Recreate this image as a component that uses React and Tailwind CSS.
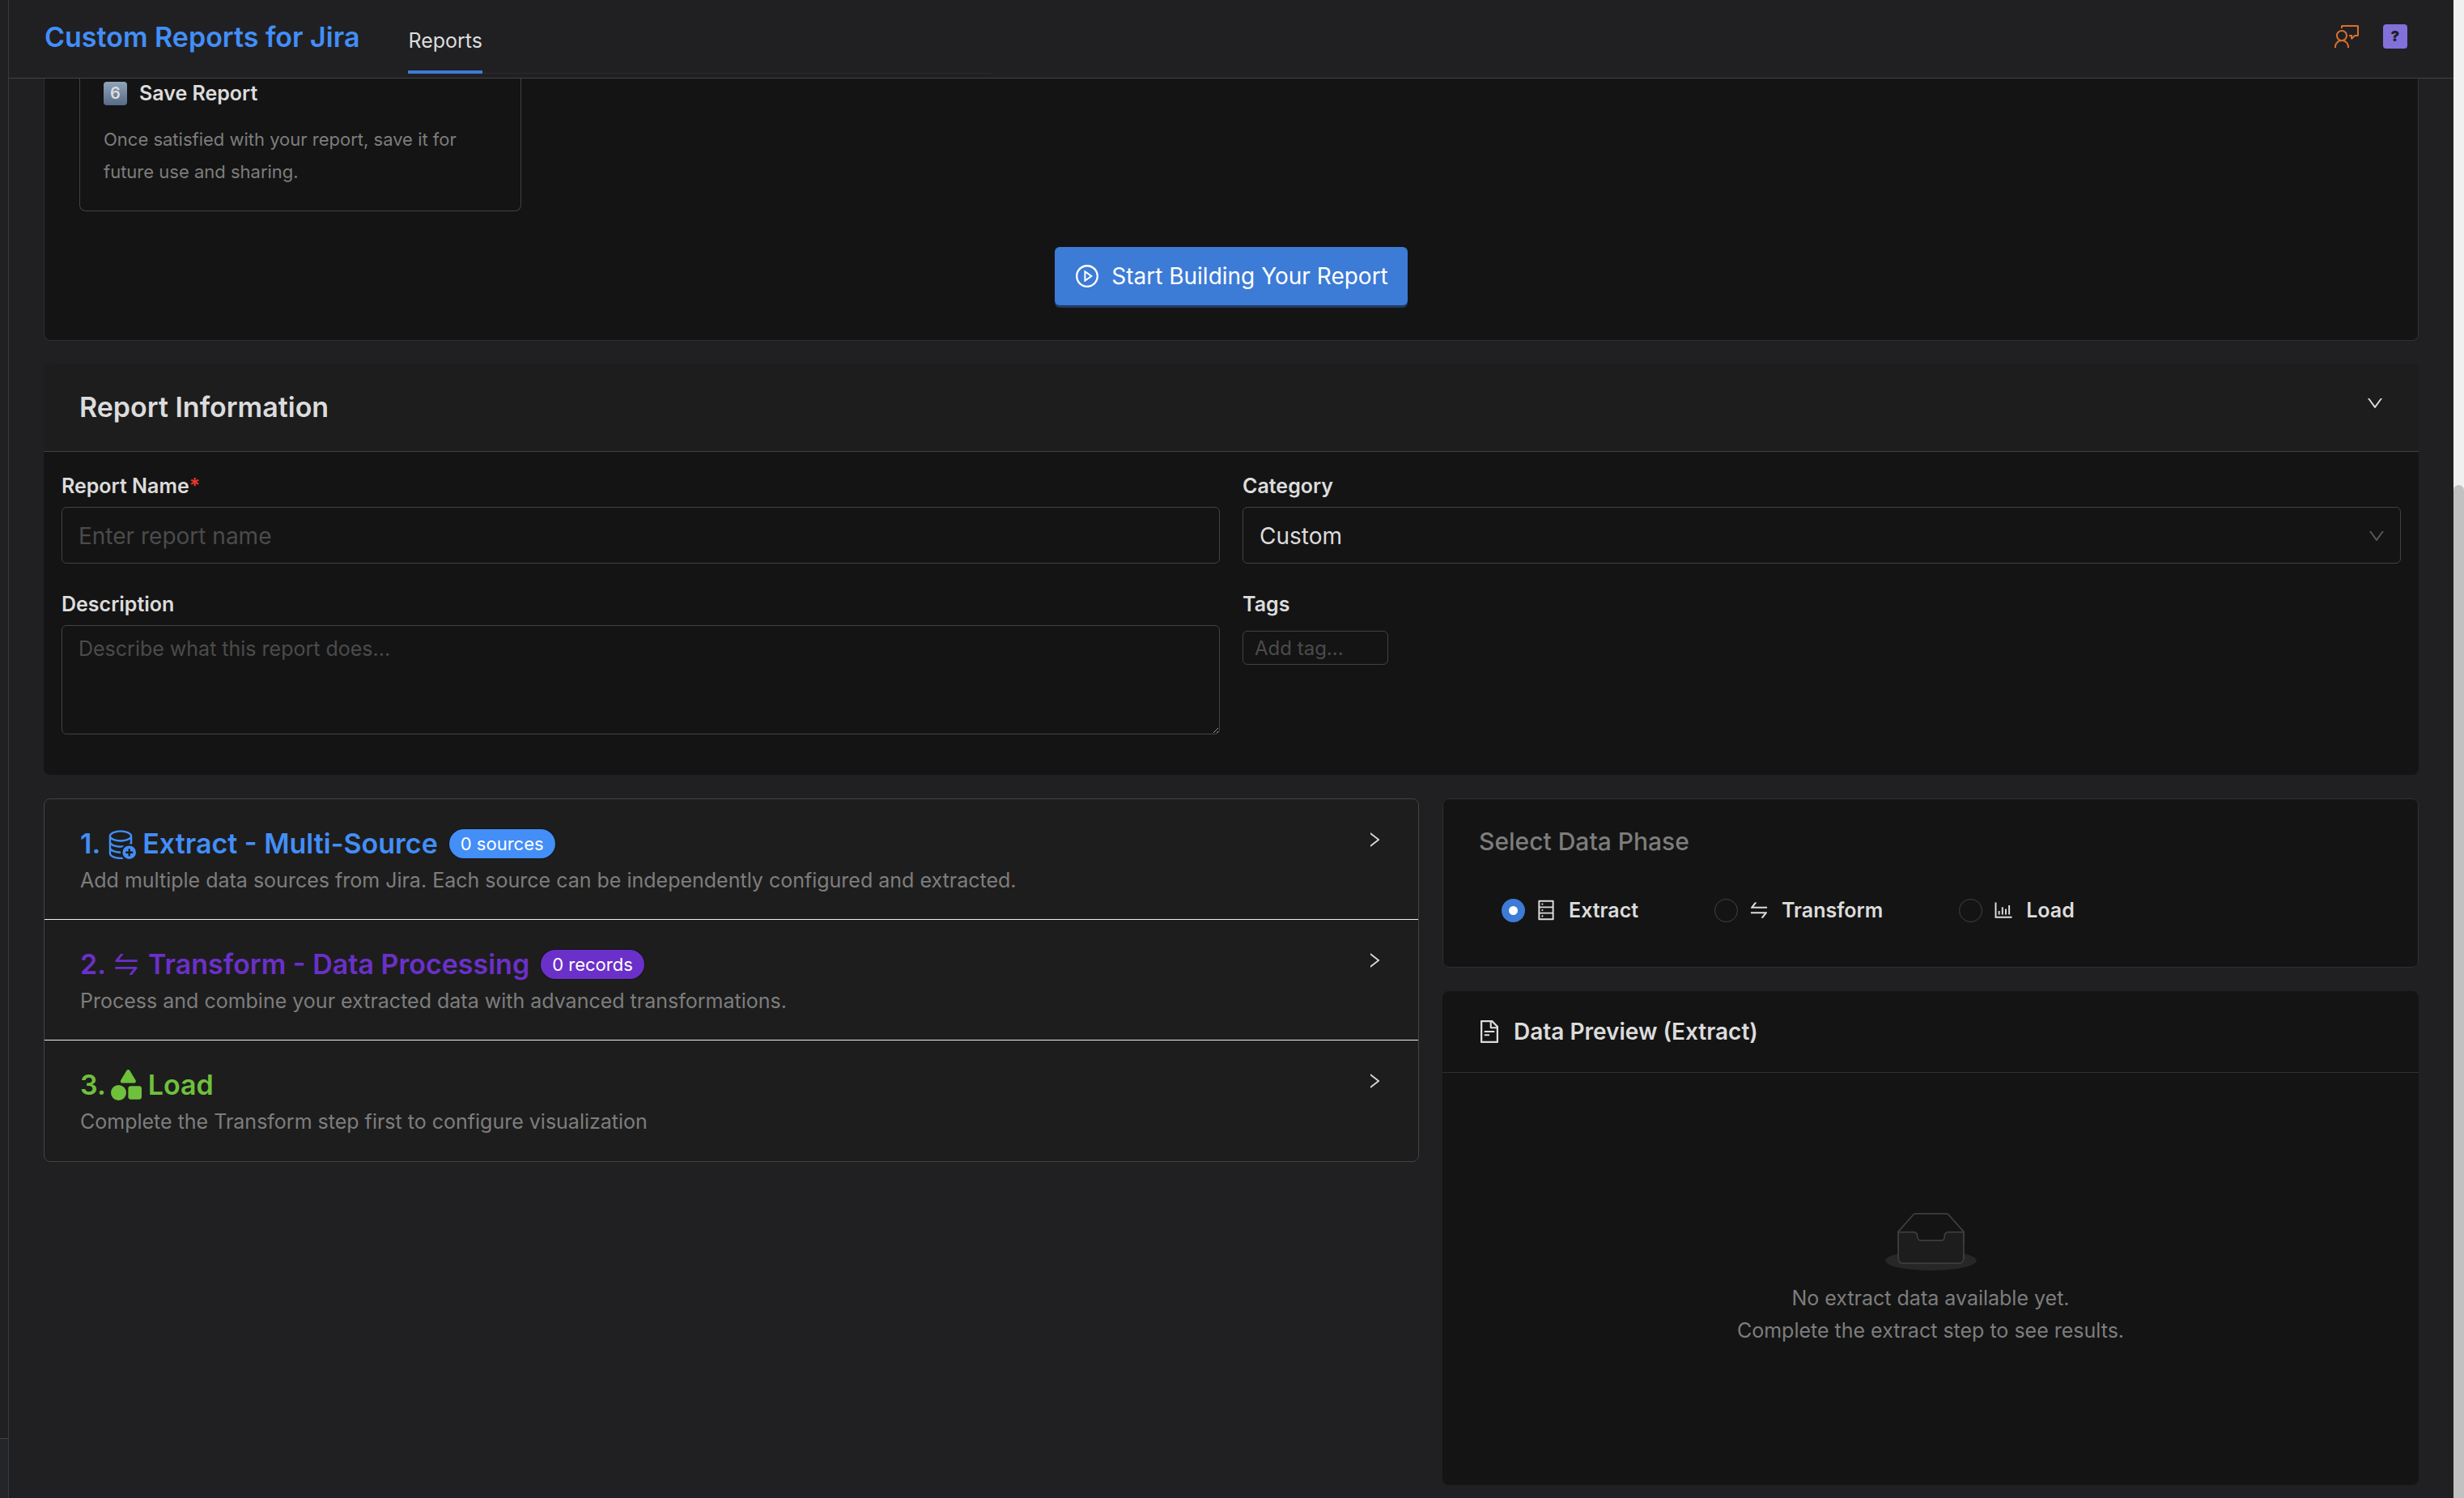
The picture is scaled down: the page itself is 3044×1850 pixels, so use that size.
import React, { useState } from 'react';
import {
  AiOutlineBarChart,
  AiOutlineDatabase,
  AiOutlineDown,
  AiOutlineFileText,
  AiOutlinePlayCircle,
  AiOutlineRight,
  AiOutlineSwap
} from 'react-icons/ai';
import { BsDatabaseAdd } from 'react-icons/bs';
import { FaShapes } from 'react-icons/fa6';
import { VscFeedback } from 'react-icons/vsc';

const steps = [
  {
    number: 1,
    title: 'Extract - Multi-Source',
    description: 'Add multiple data sources from Jira. Each source can be independently configured and extracted.',
    icon: BsDatabaseAdd,
    color: 'text-[#438ef7]',
    badge: '0 sources',
    badgeColor: 'bg-[#438ef7]'
  },
  {
    number: 2,
    title: 'Transform - Data Processing',
    description: 'Process and combine your extracted data with advanced transformations.',
    icon: AiOutlineSwap,
    color: 'text-[#6b30c9]',
    badge: '0 records',
    badgeColor: 'bg-[#6b30c9]'
  },
  {
    number: 3,
    title: 'Load',
    description: 'Complete the Transform step first to configure visualization',
    icon: FaShapes,
    color: 'text-[#6fc13c]'
  }
];

const phases = [
  { id: 'extract', label: 'Extract', icon: AiOutlineDatabase },
  { id: 'transform', label: 'Transform', icon: AiOutlineSwap },
  { id: 'load', label: 'Load', icon: AiOutlineBarChart }
];

const labelClass = 'block text-[25px] leading-9 font-semibold text-[#dcdcdc]';
const fieldClass =
  'w-full rounded-md border border-[#424242] bg-[#141414] px-5 text-[#dcdcdc] placeholder-[#4b4b4b] outline-none';

const EmptyBox = () => (
  <svg className="h-[72px] w-[113px]" viewBox="0 0 64 41" fill="none" aria-hidden="true">
    <g transform="translate(0 1)" fillRule="evenodd">
      <ellipse fill="#272727" cx="32" cy="33" rx="32" ry="7" />
      <g stroke="#3e3e3e">
        <path
          d="M55 12.76 44.854 1.258C44.367.474 43.656 0 42.907 0H21.093c-.749 0-1.46.474-1.947 1.257L9 12.761V22h46v-9.24z"
          fill="#141414"
        />
        <path
          d="M41.613 15.931c0-1.605.994-2.93 2.227-2.931H55v18.137C55 33.26 53.68 35 52.05 35h-40.1C10.32 35 9 33.259 9 31.137V13h11.16c1.233 0 2.227 1.323 2.227 2.928v.022c0 1.605 1.005 2.901 2.237 2.901h14.752c1.232 0 2.237-1.308 2.237-2.913v-.007z"
          fill="#1d1d1d"
        />
      </g>
    </g>
  </svg>
);

const Header = () => (
  <header className="flex h-[97px] shrink-0 justify-between border-b border-[#424242] pl-11 pr-[57px]">
    <div className="flex">
      <h1 className="mt-6 text-[34px] leading-[44px] font-semibold text-[#438ef7]">Custom Reports for Jira</h1>
      <nav className="ml-[60px] flex h-[91px]">
        <a href="#reports" className="border-b-4 border-[#3c7bd6] pt-8 text-[25px] leading-9 text-[#dcdcdc]">
          Reports
        </a>
        <div className="w-[628px] border-b border-[#2b2b2d]" />
      </nav>
    </div>
    <div className="mt-[30px] flex h-[30px] items-center gap-7">
      <button aria-label="Feedback">
        <VscFeedback className="size-8 text-[#d8702c]" />
      </button>
      <button
        aria-label="Help"
        className="size-[30px] rounded bg-[#8270db] text-lg leading-[30px] font-black text-[#1f1f21]"
      >
        ?
      </button>
    </div>
  </header>
);

const GuideCard = () => (
  <section className="rounded-b-lg border border-t-0 border-[#303030] bg-[#141414] px-[43px] pb-[43px]">
    <div className="w-[546px] rounded-b-lg border border-t-0 border-[#424242] px-[29px] pb-7">
      <h3 className="flex items-center gap-[15px] text-[25px] leading-9 font-semibold text-[#dcdcdc]">
        <span className="h-[29px] w-[29px] rounded bg-linear-to-b from-[#91a5b8] to-[#566c88] text-center text-xl leading-[29px]">
          6
        </span>
        Save Report
      </h3>
      <p className="mt-[19px] text-[22px] leading-10 text-[#7d7d7d]">
        Once satisfied with your report, save it for future use and sharing.
      </p>
    </div>
    <div className="mt-11 flex justify-center">
      <button className="flex h-[72px] items-center gap-3.5 rounded-md bg-[#3c7bd6] px-6 text-[28px] text-white shadow-[0_3px_0_#1f3a63]">
        <AiOutlinePlayCircle className="size-8" />
        Start Building Your Report
      </button>
    </div>
  </section>
);

const ReportInformation = () => (
  <section className="mt-7 overflow-hidden rounded-lg bg-[#141414]">
    <div className="flex h-[109px] items-center justify-between border-b border-[#424242] bg-[#1d1d1d] px-11">
      <h2 className="text-[34px] leading-[44px] font-semibold text-[#dcdcdc]">Report Information</h2>
      <button aria-label="Collapse report information" className="-mr-0.5 pb-2.5">
        <AiOutlineDown className="size-6 text-[#dcdcdc]" />
      </button>
    </div>
    <div className="grid grid-cols-2 gap-x-7 gap-y-8 px-[22px] pt-6 pb-[50px]">
      <div>
        <label htmlFor="name" className={labelClass}>
          Report Name<span className="text-[#e5382b]">*</span>
        </label>
        <input id="name" placeholder="Enter report name" className={`${fieldClass} mt-2 h-[70px] pt-0.5 text-[28px]`} />
      </div>
      <div>
        <label htmlFor="category" className={labelClass}>
          Category
        </label>
        <div className="relative mt-2">
          <select id="category" className={`${fieldClass} h-[70px] appearance-none pt-0.5 text-[28px]`}>
            <option>Custom</option>
          </select>
          <AiOutlineDown className="pointer-events-none absolute top-6 right-[18px] size-6 text-[#5a5a5a]" />
        </div>
      </div>
      <div>
        <label htmlFor="description" className={labelClass}>
          Description
        </label>
        <textarea
          id="description"
          placeholder="Describe what this report does..."
          className={`${fieldClass} mt-2 block h-[135px] resize-y py-2.5 text-[25px] leading-9 scheme-dark`}
        />
      </div>
      <div>
        <label htmlFor="tags" className={labelClass}>
          Tags
        </label>
        <input
          id="tags"
          placeholder="Add tag..."
          className="mt-[15px] h-[42px] w-[180px] rounded-md border border-[#424242] bg-[#141414] px-3.5 text-2xl text-[#dcdcdc] placeholder-[#4b4b4b] outline-none"
        />
      </div>
    </div>
  </section>
);

const StepList = () => (
  <section className="divide-y divide-[#f0f0f0] self-start overflow-hidden rounded-lg border border-[#424242] bg-[#1d1d1d]">
    {steps.map((step) => {
      const Icon = step.icon;

      return (
        <div key={step.number} className="flex h-[149px] items-start justify-between pt-8 pr-[42px] pl-11">
          <div>
            <h2 className={`flex items-center text-[34px] leading-[46px] font-semibold ${step.color}`}>
              {step.number}.
              <Icon className="mr-2 ml-1.5 size-[38px]" />
              {step.title}
              {step.badge && (
                <span
                  className={`ml-3.5 h-9 rounded-full px-3.5 text-[22px] leading-9 font-normal text-white shadow-[0_0_0_1px_#141414] ${step.badgeColor}`}
                >
                  {step.badge}
                </span>
              )}
            </h2>
            <p className="mt-1 text-[25px] leading-9 text-[#7d7d7d]">{step.description}</p>
          </div>
          <button aria-label={`Expand ${step.title}`} className="mt-1.5">
            <AiOutlineRight className="size-6 text-[#dcdcdc]" />
          </button>
        </div>
      );
    })}
  </section>
);

const PhasePicker = ({ phase, onChange }) => (
  <fieldset className="h-[209px] rounded-lg border border-[#303030] bg-[#141414] px-11 pt-8">
    <div className="text-[30px] leading-10 font-medium text-[#7d7d7d]">Select Data Phase</div>
    <div className="mt-[47px] ml-7 flex gap-[94px]">
      {phases.map(({ id, label, icon: Icon }) => (
        <label key={id} className="flex items-center text-[25px] leading-9 font-semibold text-[#dcdcdc]">
          <input
            type="radio"
            name="phase"
            checked={phase === id}
            onChange={() => onChange(id)}
            className="size-[29px] appearance-none rounded-full border border-[#424242] checked:border-[9px] checked:border-[#3c7bd6] checked:bg-white"
          />
          <Icon className="mr-3.5 ml-3 size-7" />
          {label}
        </label>
      ))}
    </div>
  </fieldset>
);

const DataPreview = () => (
  <section className="mt-[29px] flex flex-1 flex-col rounded-lg bg-[#141414]">
    <h2 className="flex h-[101px] items-center gap-3.5 border-b border-[#303030] px-[42px] text-[28px] font-semibold text-[#dcdcdc]">
      <AiOutlineFileText className="size-8" />
      Data Preview (Extract)
    </h2>
    <div className="flex flex-1 flex-col items-center justify-center">
      <EmptyBox />
      <p className="mt-3.5 text-center text-[25px] leading-10 text-[#7d7d7d]">
        No extract data available yet.
        <br />
        Complete the extract step to see results.
      </p>
    </div>
  </section>
);

const App = () => {
  const [phase, setPhase] = useState('extract');

  return (
    <div className="flex h-screen overflow-hidden bg-[#202022] font-['Inter',sans-serif]">
      {/* Edge of the collapsed side navigation */}
      <aside className="flex w-[11px] shrink-0 flex-col border-r border-[#39393b]">
        <div className="flex-1" />
        <div className="h-[74px] border-t border-[#424242] bg-[#242529]" />
      </aside>

      <div className="flex min-w-0 flex-1 flex-col">
        <Header />
        <main className="flex flex-1 flex-col px-[43px] pb-4">
          <GuideCard />
          <ReportInformation />
          <div className="mt-[29px] grid flex-1 grid-cols-[1699fr_1206fr] gap-[29px]">
            <StepList />
            <div className="flex flex-col">
              <PhasePicker phase={phase} onChange={setPhase} />
              <DataPreview />
            </div>
          </div>
        </main>
      </div>

      {/* Scrollbar */}
      <div className="flex w-[13px] shrink-0 flex-col bg-[#f0f0f0] pt-[599px]">
        <div className="flex-1 rounded-t-full bg-[#c1c1c1]" />
      </div>
    </div>
  );
};

export default App;
